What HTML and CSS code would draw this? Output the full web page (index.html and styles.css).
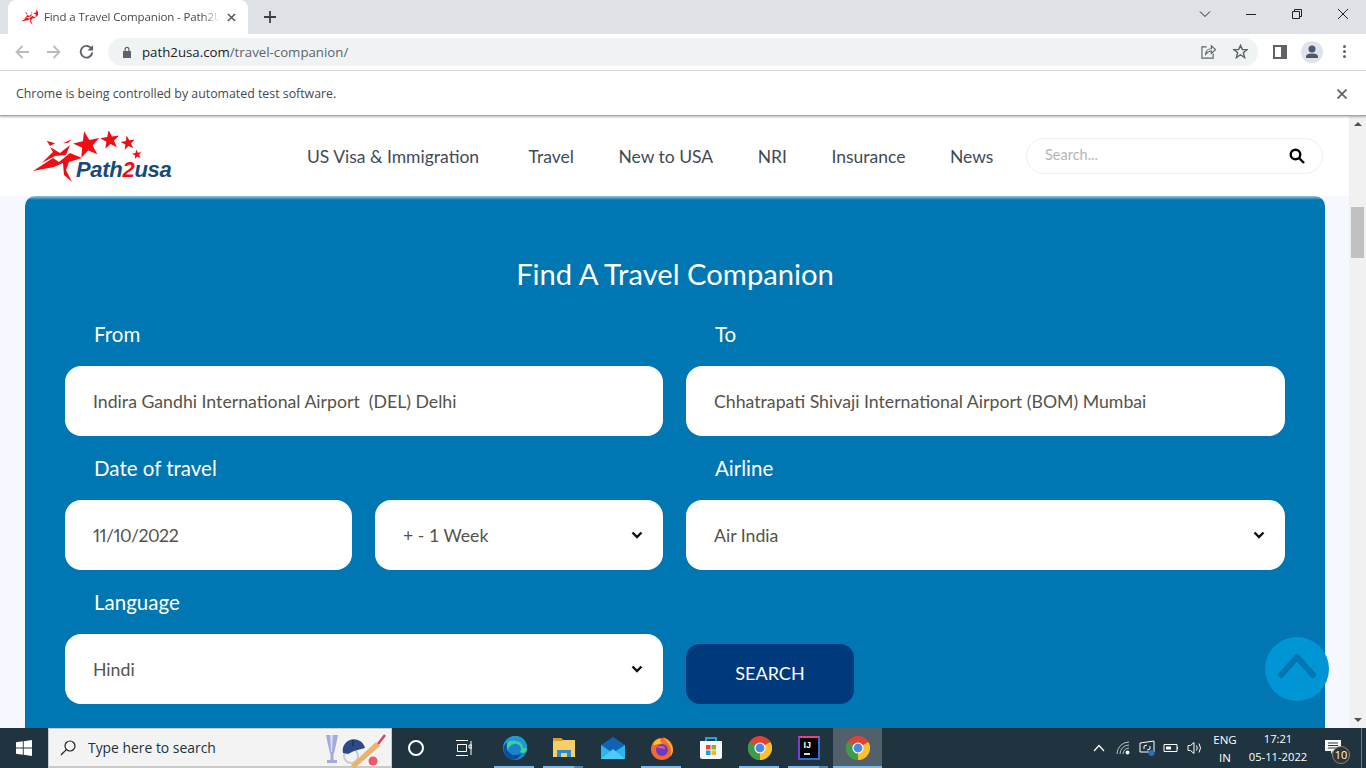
FILE: index.html
```html
<!DOCTYPE html>
<html lang="en">
<head>
<meta charset="utf-8">
<title>Find a Travel Companion - Path2Usa</title>
<link rel="stylesheet" href="styles.css">
</head>
<body>
<svg class="defs" width="0" height="0" aria-hidden="true">
  <defs>
    <symbol id="chrome" viewBox="0 0 24 24">
      <circle cx="12" cy="12" r="12" fill="#db4437"/>
      <path d="M12 12 L22.4 6 A12 12 0 0 1 12 24Z" fill="#fbc02d"/>
      <path d="M12 24 A12 12 0 0 1 1.6 6 L12 12Z" fill="#3d9c4a"/>
      <circle cx="12" cy="12" r="5.6" fill="#fff"/>
      <circle cx="12" cy="12" r="4.4" fill="#4a86e8"/>
    </symbol>
    <polygon id="star" points="0,-10 2.35,-3.24 9.51,-3.09 3.8,1.24 5.88,8.09 0,4 -5.88,8.09 -3.8,1.24 -9.51,-3.09 -2.35,-3.24"/>
    <g id="mark" fill="#f00d14">
      <use href="#star" transform="translate(54 14) scale(1.4) rotate(-12)"/>
      <use href="#star" transform="translate(77 9) scale(1) rotate(-8)"/>
      <use href="#star" transform="translate(95 12) scale(.75) rotate(-10)"/>
      <use href="#star" transform="translate(104 23.500) scale(.5) rotate(-10)"/>
      <path d="M13.700 9.700L22 12.300L17 15Z"/>
      <path d="M30 12.300L38.700 8.300L35.300 11.700Z"/>
      <path d="M8.700 32L20 21L17 16L27 22L37 14L33 24L22 25Z"/>
      <path d="M0 40L20 27L26 31L37 22L49 27L36 31L33 39L39 51L31 44L30 32L21 36Z"/>
    </g>
  </defs>
</svg>

<div class="screen">
  <div class="tabstrip">
    <div class="tab">
      <svg class="favicon" viewBox="0 2 56 50"><use href="#mark"/></svg>
      <span class="tab-title">Find a Travel Companion - Path2Usa</span>
      <svg class="tab-x" viewBox="0 0 10 10"><path d="M1 1L9 9M9 1L1 9"/></svg>
    </div>
    <svg class="new-tab" viewBox="0 0 12 12"><path d="M6 0V12M0 6H12"/></svg>
    <div class="win-controls">
      <svg viewBox="0 0 12 12" class="wc"><path d="M1 3.500L6 8.500L11 3.500"/></svg>
      <svg viewBox="0 0 12 12" class="wc"><path d="M1 6.500H11"/></svg>
      <svg viewBox="0 0 12 12" class="wc"><path d="M1.500 3.500H8.500V10.500H1.500ZM3.500 3.500V1.500H10.500V8.500H8.500"/></svg>
      <svg viewBox="0 0 12 12" class="wc"><path d="M1 1L11 11M11 1L1 11"/></svg>
    </div>
  </div>

  <div class="toolbar">
    <svg class="tb-icon dim" viewBox="0 0 14 14"><path d="M14 7H1.500M7.500 1L1.500 7L7.500 13"/></svg>
    <svg class="tb-icon dim" viewBox="0 0 14 14"><path d="M0 7H12.500M6.500 1L12.500 7L6.500 13"/></svg>
    <svg class="tb-icon reload" viewBox="0 0 16 16"><path d="M13.600 5.500A6.200 6.200 0 1 0 14.200 9"/><path class="solid" d="M15 1V7H9Z"/></svg>
    <div class="omnibox">
      <svg class="lock" viewBox="0 0 10 12"><path d="M1 5H9V12H1Z M2.500 5V3.200A2.500 2.500 0 0 1 7.500 3.200V5H6.300V3.200A1.300 1.300 0 0 0 3.700 3.200V5Z"/></svg>
      <span class="url"><b>path2usa.com</b>/travel-companion/</span>
      <svg class="omni-icon share" viewBox="0 0 16 16"><path d="M6 3H1V15H13V10M5 11C5 7 8 5 11 5V2L15.500 6L11 10V7.500C8 7.500 6.500 9 5 11Z"/></svg>
      <svg class="omni-icon star-btn" viewBox="0 0 16 16"><path d="M8 1.500L10 6H15L11 9.300L12.400 14.500L8 11.500L3.600 14.500L5 9.300L1 6H6Z"/></svg>
    </div>
    <svg class="panel" viewBox="0 0 14 14"><path d="M0 0H14V14H0ZM2 2V12H8V2Z" fill-rule="evenodd"/></svg>
    <div class="avatar"><svg viewBox="0 0 22 22"><circle cx="11" cy="8" r="3.500"/><path d="M5 16C5 13 8 12.500 11 12.500S17 13 17 16V17H5Z"/></svg></div>
    <div class="kebab"><i></i><i></i><i></i></div>
  </div>

  <div class="infobar">
    <span>Chrome is being controlled by automated test software.</span>
    <svg class="info-x" viewBox="0 0 10 10"><path d="M0.500 0.500L9.500 9.500M9.500 0.500L0.500 9.500"/></svg>
  </div>

  <div class="viewport">
    <div class="page">
      <header class="site-header">
        <a class="logo">
          <svg class="logo-mark" viewBox="0 0 140 52"><use href="#mark"/></svg>
          <span class="logo-text">Path<em>2</em>usa</span>
        </a>
        <nav class="nav">
          <a>US Visa &amp; Immigration</a>
          <a>Travel</a>
          <a>New to USA</a>
          <a>NRI</a>
          <a>Insurance</a>
          <a>News</a>
        </nav>
        <div class="site-search">
          <span>Search...</span>
          <svg viewBox="0 0 16 16"><circle cx="6.500" cy="6.500" r="4.800"/><path d="M10 10L15 15"/></svg>
        </div>
      </header>

      <main class="card">
        <h1>Find A Travel Companion</h1>
        <div class="form">
          <div class="field">
            <label>From</label>
            <div class="control">Indira Gandhi International Airport&nbsp; (DEL) Delhi</div>
          </div>
          <div class="field">
            <label>To</label>
            <div class="control">Chhatrapati Shivaji International Airport (BOM) Mumbai</div>
          </div>
          <div class="field">
            <label>Date of travel</label>
            <div class="split">
              <div class="control date">11/10/2022</div>
              <div class="control select">+ - 1 Week<svg viewBox="0 0 12 8"><path d="M1.500 1.500L6 6L10.500 1.500"/></svg></div>
            </div>
          </div>
          <div class="field">
            <label>Airline</label>
            <div class="control select">Air India<svg viewBox="0 0 12 8"><path d="M1.500 1.500L6 6L10.500 1.500"/></svg></div>
          </div>
          <div class="field">
            <label>Language</label>
            <div class="control select">Hindi<svg viewBox="0 0 12 8"><path d="M1.500 1.500L6 6L10.500 1.500"/></svg></div>
          </div>
          <div class="field action">
            <button class="search-btn">SEARCH</button>
          </div>
        </div>
      </main>
    </div>

    <div class="scrollbar">
      <span class="arrow up"></span>
      <div class="thumb-track"><div class="thumb"></div></div>
      <span class="arrow down"></span>
    </div>

    <a class="to-top"><svg viewBox="0 0 40 26"><path d="M4 22L20 4L36 22"/></svg></a>
  </div>

  <footer class="taskbar">
    <svg class="start" viewBox="0 0 16 16"><path d="M0 2.300L6.800 1.300V7.500H0ZM7.700 1.200L16 0V7.500H7.700ZM0 8.500H6.800V14.700L0 13.700ZM7.700 8.500H16V16L7.700 14.800Z"/></svg>
    <div class="task-search">
      <svg class="glass" viewBox="0 0 16 16"><circle cx="10" cy="6" r="5"/><path d="M6.300 9.700L1 15"/></svg>
      <span>Type here to search</span>
      <svg class="doodle" viewBox="0 0 64 36">
        <path d="M2 3H14L11.500 15Q10.500 20 9.500 22V28H13V31H3V28H6.500V22Q5.500 20 4.500 15Z" fill="#a5a9dc"/>
        <path d="M6 3H9L8 20H7Z" fill="#d8daf2"/>
        <circle cx="27" cy="24" r="7" fill="none" stroke="#c9ced2" stroke-width="2"/>
        <path d="M19 21A11 11 0 1 1 41 16L30 19L24 22Z" fill="#2e4a86"/>
        <path d="M29 8V14" stroke="#10203f" stroke-width="1"/>
        <path d="M27 33L52 10L56 14L31 36Q28 36 27 33Z" fill="#e8b271"/>
        <path d="M54 12L61 3" stroke="#d9435f" stroke-width="2.500"/>
        <circle cx="49" cy="29" r="4.500" fill="#f0566e"/>
      </svg>
    </div>
    <div class="task-icons">
      <div class="ti plain"><span class="cortana"></span></div>
      <div class="ti plain"><svg class="taskview" viewBox="0 0 16 16"><path d="M0 .500H12M0 15.500H12M1.500 4.500H10.500V11.500H1.500ZM15 1V15M13 5H16V8H13Z"/></svg></div>
      <div class="ti on">
        <svg viewBox="0 0 24 24"><circle cx="12" cy="12" r="12" fill="#1b84c9"/><path d="M7 23C0 20-2 9 5 4C2 10 4 18 11 19C15 19.500 18 18 19 16C17 22 12 25 7 23Z" fill="#0f4f98"/><path d="M12 0C19 0 24 5 24 13C24 17 19 18 17 16C20 12 16 7 11 8C7 9 5 12 5 15C2 8 6 0 12 0Z" fill="#3fcf9a"/><path d="M12 0C6 0 1 5 0 11C3 6 8 4 13 5C18 6 20 9 20 12L24 12C24 5 19 0 12 0Z" fill="#1b9ad6"/></svg>
      </div>
      <div class="ti on split-on">
        <svg viewBox="0 0 24 24"><path d="M1 2H9L11 4H23V21H1Z" fill="#f6cf66"/><path d="M1 2H9L11 5H1Z" fill="#d99e27"/><path d="M5 21V14H19V21H15V17H9V21Z" fill="#2e8ad0"/></svg>
      </div>
      <div class="ti">
        <svg viewBox="0 0 24 24"><path d="M0 9L12 1L24 9V23H0Z" fill="#0f63b4"/><path d="M0 9L12 17L24 9V23H0Z" fill="#29b5ee"/><path d="M0 23L12 13L24 23Z" fill="#4fc9f5"/></svg>
      </div>
      <div class="ti on">
        <svg viewBox="0 0 24 24"><circle cx="12" cy="13" r="11" fill="#f26a2e"/><path d="M13 1C22 5 26 15 20 21C24 12 18 8 13 1Z" fill="#f9b233"/><path d="M3 9C4 4 9 2 11 3C9 5 11 7 15 7C9 7 7 9 3 9Z" fill="#fbbf2c"/><circle cx="12" cy="14" r="6" fill="#6a3bc6"/><path d="M7 11C11 9 15 10 15 13C12 12 9 13 7 11Z" fill="#ef5d7c"/></svg>
      </div>
      <div class="ti">
        <svg viewBox="0 0 24 24"><path d="M7 5V2H17V5" fill="none" stroke="#1ba3dc" stroke-width="2"/><path d="M1 5H23V21Q23 23 21 23H3Q1 23 1 21Z" fill="#f7f7f7"/><path d="M7 9H11.500V13.500H7Z" fill="#ea4a2c"/><path d="M12.500 9H17V13.500H12.500Z" fill="#7fba2e"/><path d="M7 14.500H11.500V19H7Z" fill="#1b9fe0"/><path d="M12.500 14.500H17V19H12.500Z" fill="#fbb812"/></svg>
      </div>
      <div class="ti on"><svg viewBox="0 0 24 24"><use href="#chrome"/></svg></div>
      <div class="ti on split-on">
        <div class="ij"><span>IJ</span><i></i></div>
      </div>
      <div class="ti on active"><svg viewBox="0 0 24 24"><use href="#chrome"/></svg></div>
    </div>
    <div class="tray">
      <svg class="tray-chev" viewBox="0 0 12 8"><path d="M1 7L6 1.500L11 7"/></svg>
      <svg class="tray-icon" viewBox="0 0 16 16"><path d="M2 14A12 12 0 0 1 14 2M5 14A9 9 0 0 1 14 5M8 14A6 6 0 0 1 14 8" class="faint"/><circle cx="12.500" cy="12.500" r="2" class="fill"/></svg>
      <svg class="tray-icon" viewBox="0 0 16 16"><path d="M1 3L15 1V12H1Z M5 9L5 6L8 5M11 6L11 9L8 10"/><circle cx="12.500" cy="13" r="3" class="blue"/></svg>
      <svg class="tray-icon" viewBox="0 0 16 16"><path d="M1 4.500H14V11.500H1ZM14.500 7V9"/><path class="fill" d="M3 6.500H8V9.500H3Z"/></svg>
      <svg class="tray-icon" viewBox="0 0 16 16"><path d="M1 5.500H3.500L7 2.500V13.500L3.500 10.500H1ZM9.500 5.500Q11 8 9.500 10.500M12 3.500Q15 8 12 12.500"/></svg>
      <div class="lang"><span>ENG</span><span>IN</span></div>
      <div class="clock"><span>17:21</span><span>05-11-2022</span></div>
      <div class="notify">
        <svg viewBox="0 0 16 14"><path d="M0 0H16V11H8L6 14V11H0Z"/><path class="lines" d="M3 3H13M3 5.500H13M3 8H13"/></svg>
        <span class="badge">10</span>
      </div>
      <i class="show-desktop"></i>
    </div>
  </footer>
</div>
</body>
</html>
```
FILE: styles.css
```css
* { box-sizing: border-box; }
html, body { margin: 0; height: 100%; overflow: hidden; }
body { font-family: "Lato", "Open Sans", sans-serif; }
.defs { position: absolute; }
svg { display: block; }

.screen { width: 1366px; height: 768px; display: flex; flex-direction: column; background: #fff; }

/* browser chrome */
.tabstrip { height: 34px; background: #dee1e6; display: flex; align-items: flex-end; flex: none; }
.tab { width: 240px; height: 34px; margin-left: 8px; background: #fff; border-radius: 8px 8px 0 0; display: flex; align-items: center; padding: 0 12px 0 13px; }
.favicon { width: 17px; height: 15px; flex: none; }
.tab-title { margin-left: 6px; width: 176px; white-space: nowrap; overflow: hidden; font: 11.500px/16px "Open Sans", sans-serif; letter-spacing: -.12px; color: #45494e; -webkit-mask-image: linear-gradient(to right, #000 158px, transparent 176px); mask-image: linear-gradient(to right, #000 158px, transparent 176px); }
.tab-x { width: 9px; height: 9px; margin-left: 7px; fill: none; stroke: #4f5357; stroke-width: 1.600; }
.new-tab { width: 12px; height: 12px; margin: 0 0 11px 16px; fill: none; stroke: #3c4043; stroke-width: 1.800; }
.win-controls { margin-left: auto; height: 34px; display: flex; align-items: center; gap: 34px; padding: 0 17px 6px 0; }
.wc { width: 12px; height: 12px; fill: none; stroke: #222; stroke-width: 1; }

.toolbar { height: 37px; flex: none; background: #fff; border-bottom: 1px solid #dadce0; display: flex; align-items: center; padding-left: 15px; padding-bottom: 1px; }
.tb-icon { width: 14px; height: 14px; margin-right: 18px; fill: none; stroke: #5f6368; stroke-width: 1.800; }
.tb-icon.dim { stroke: #babcbe; }
.tb-icon.reload { width: 15px; height: 15px; margin-right: 14px; stroke-width: 2; }
.tb-icon .solid { fill: #5f6368; stroke: none; }
.omnibox { width: 1150px; height: 28px; background: #eff3f4; border-radius: 14px; display: flex; align-items: center; padding-left: 14px; }
.lock { width: 10px; height: 12px; fill: #5f6368; }
.lock path { fill-rule: evenodd; }
.url { margin-left: 10px; font: 13.250px/18px "Open Sans", sans-serif; color: #5f6368; }
.url b { font-weight: 400; color: #202124; }
.omni-icon { width: 15px; height: 15px; fill: none; stroke: #5f6368; stroke-width: 1.200; }
.share { margin-left: auto; }
.star-btn { margin-left: 17px; margin-right: 10px; stroke-width: 1.500; }
.panel { width: 14px; height: 14px; margin-left: 15px; fill: #5f6368; }
.avatar { width: 22px; height: 22px; margin-left: 14px; border-radius: 50%; background: #e0e3e8; }
.avatar svg { width: 22px; height: 22px; fill: #4a5a70; }
.kebab { margin-left: 20px; display: flex; flex-direction: column; gap: 2px; }
.kebab i { width: 3px; height: 3px; border-radius: 50%; background: #5f6368; }

.infobar { height: 45px; flex: none; background: #fff; display: flex; align-items: center; justify-content: space-between; padding: 1px 19px 0 16px; border-bottom: 1px solid #a8a8a8; box-shadow: 0 1px 2px rgba(0,0,0,.3); position: relative; z-index: 2; font: 12.350px/16px "Open Sans", sans-serif; color: #45494e; }
.info-x { width: 10px; height: 10px; fill: none; stroke: #5f6368; stroke-width: 1.800; }

/* page */
.viewport { flex: 1; min-height: 0; display: flex; position: relative; overflow: hidden; }
.page { flex: 1; min-width: 0; background: #f5f9ff; overflow: hidden; }
.site-header { height: 80px; background: #fff; display: flex; align-items: center; padding: 0 26px 0 33px; }
.logo { width: 140px; height: 52px; position: relative; flex: none; margin-top: 2px; }
.logo-mark { width: 140px; height: 52px; }
.logo-text { position: absolute; left: 43px; top: 25px; font: italic 700 22px/28px "Liberation Sans", sans-serif; color: #17497a; letter-spacing: -.3px; }
.logo-text em { color: #f00d14; font-style: italic; }
.nav { display: flex; gap: 44.500px; margin-left: 134px; font-size: 17.500px; color: #3f4a58; white-space: nowrap; }
.nav a:nth-child(1) { margin-right: 5px; }
.site-search { width: 297px; height: 36px; margin-left: auto; border: 1px solid #eee; border-radius: 18px; display: flex; align-items: center; justify-content: space-between; padding: 0 17px 0 18px; font-size: 14.500px; color: #b5b5b5; background: #fff; }
.site-search span { margin-bottom: 3px; }
.site-search svg { width: 16px; height: 16px; fill: none; stroke: #000; stroke-width: 2.400; }

.card { margin: 0 24px 0 25px; background: linear-gradient(#9cc3d9, #0076b2 4px); border-radius: 10px 10px 0 0; padding: 52px 40px 40px; min-height: 560px; }
.card h1 { margin: 0; padding-bottom: 2px; height: 54px; text-align: center; font-size: 29.200px; font-weight: 400; line-height: 52px; color: #fff; }
.form { display: grid; grid-template-columns: 598px 599px; column-gap: 23px; }
.field label { display: block; padding: 15px 0 15px 29px; font-size: 20.500px; line-height: 34px; color: #fff; }
.split { display: grid; grid-template-columns: 287px 288px; column-gap: 23px; }
.control { height: 70px; background: #fff; border-radius: 16px; display: flex; align-items: center; justify-content: space-between; padding: 0 20px 0 28px; font-size: 17.700px; color: #55524a; white-space: nowrap; }
.date { font-variant-numeric: proportional-nums; letter-spacing: -.5px; }
.select svg { width: 12px; height: 8px; fill: none; stroke: #111; stroke-width: 2.400; }
.action { display: flex; align-items: flex-end; }
.search-btn { width: 168px; height: 60px; border: 0; padding: 0 0 2px; border-radius: 14px; background: #003a7c; color: #fff; font: 400 18px "Lato", sans-serif; }

.scrollbar { width: 17px; flex: none; background: #f1f1f1; display: flex; flex-direction: column; align-items: center; justify-content: space-between; padding: 6px 0; }
.arrow { width: 0; height: 0; border-left: 4px solid transparent; border-right: 4px solid transparent; }
.arrow.up { border-bottom: 4px solid #505050; }
.arrow.down { border-top: 4px solid #505050; }
.thumb-track { flex: 1; width: 13px; padding-top: 81px; }
.thumb { height: 51px; background: #c1c1c1; }
.to-top { position: absolute; left: 1265px; top: 521px; width: 64px; height: 64px; border-radius: 50%; background: #0095d5; display: flex; align-items: center; justify-content: center; }
.to-top svg { width: 40px; height: 26px; margin-bottom: 6px; fill: none; stroke: #0076b2; stroke-width: 6; stroke-linecap: round; stroke-linejoin: round; }

/* taskbar */
.taskbar { height: 40px; flex: none; background: #20343f; display: flex; align-items: stretch; position: relative; }
.start { width: 16px; height: 16px; margin: 12px 16px 0 16px; fill: #fff; }
.task-search { width: 344px; background: #f3f3f3; border: 1px solid #c9c9c9; border-bottom-width: 2px; display: flex; align-items: center; padding-left: 11px; font: 13.900px "Open Sans", sans-serif; color: #20303f; position: relative; }
.glass { width: 16px; height: 16px; margin-right: 12px; fill: none; stroke: #222; stroke-width: 1.200; }
.doodle { position: absolute; left: 275px; top: 3px; width: 64px; height: 36px; }
.task-icons { display: flex; }
.ti { width: 49px; display: flex; align-items: center; justify-content: center; position: relative; }
.ti svg { width: 24px; height: 24px; }
.ti.on::after { content: ""; position: absolute; left: 4px; right: 5px; bottom: 0; height: 2px; background: #76b9ed; }
.ti.split-on::before { content: ""; position: absolute; right: 5px; width: 9px; bottom: 0; height: 2px; background: #4f86ad; z-index: 1; }
.ti.active { background: #51606a; }
.ti.active::after { left: 0; right: 0; }
.cortana { width: 16px; height: 16px; border: 2px solid #fff; border-radius: 50%; margin-right: 1px; }
.ti svg.taskview { width: 16px; height: 16px; margin-right: 3px; fill: none; stroke: #fff; stroke-width: 1; }
.ij { width: 22px; height: 24px; background: #000; border: 2px solid #2d6fd8; border-top-color: #e3418a; border-left-color: #7b3bd8; color: #fff; font: 700 9px/10px "Liberation Sans", sans-serif; padding: 2px 0 0 4px; position: relative; }
.ij span { display: block; }
.ij i { position: absolute; left: 4px; bottom: 3px; width: 6px; height: 2px; background: #ddd; }

.tray { margin-left: auto; display: flex; align-items: center; color: #fff; padding-right: 4px; }
.tray-chev { width: 12px; height: 8px; margin-right: 2px; fill: none; stroke: #fff; stroke-width: 1.200; }
.tray-icon { width: 16px; height: 16px; margin-left: 8px; fill: none; stroke: #fff; stroke-width: 1; }
.tray-icon .faint { stroke: #b9c2c8; }
.tray-icon .fill { fill: #fff; stroke: none; }
.tray-icon .blue { fill: #2c6fc0; stroke: none; }
.lang, .clock { display: flex; flex-direction: column; align-items: center; font: 11.200px/18px "Open Sans", sans-serif; }
.lang { margin-left: 7px; width: 30px; padding-top: 1px; font-size: 11.500px; }
.clock { margin-left: 3px; width: 70px; }
.notify { width: 30px; height: 30px; margin-left: 12px; position: relative; }
.notify svg { width: 16px; height: 14px; margin-top: 7px; fill: #fff; }
.notify .lines { fill: none; stroke: #20343f; stroke-width: 1; }
.badge { position: absolute; left: 7px; top: 13px; width: 18px; height: 18px; border-radius: 50%; background: #333; border: 1px solid #888; font: 11px/16px "Open Sans", sans-serif; text-align: center; }
.show-desktop { width: 1px; height: 40px; margin-left: 6px; background: #6d7a82; }
```
